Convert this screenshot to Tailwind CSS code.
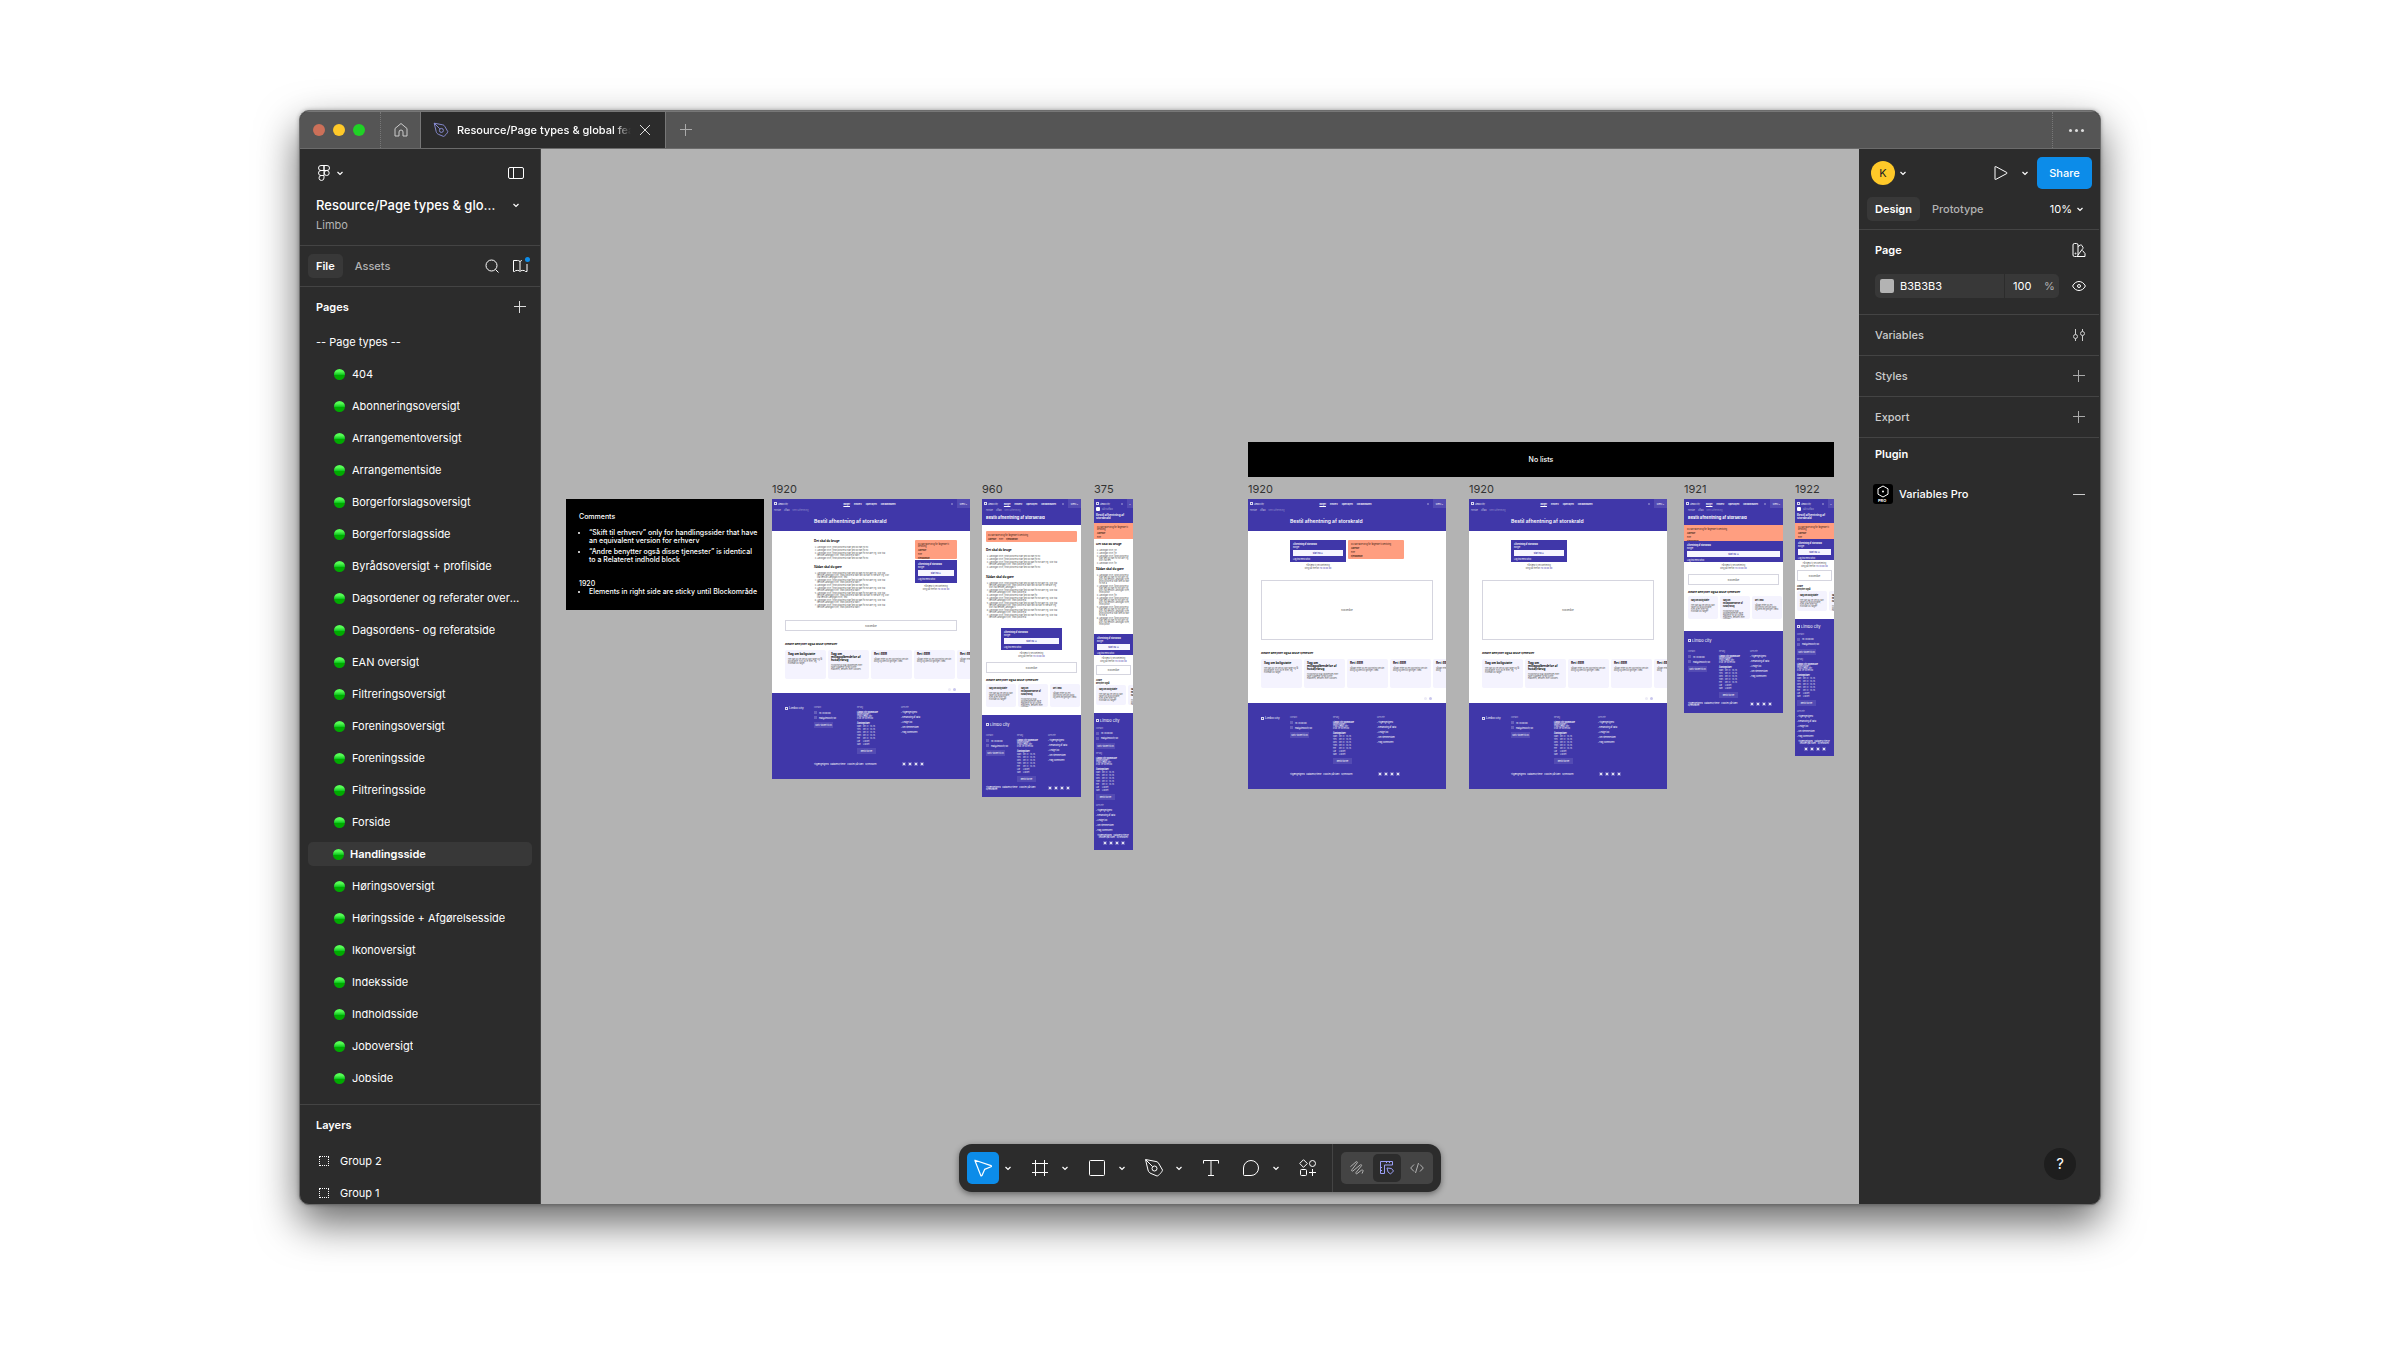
<!DOCTYPE html>
<html lang="en">
<head>
    <meta charset="UTF-8">
    <meta name="viewport" content="width=device-width, initial-scale=1.0">
    <title>Resource/Page types &amp; global features</title>
    <script src="https://cdn.jsdelivr.net/npm/@tailwindcss/browser@4"></script>
</head>
<body class="h-screen flex bg-white px-[12.5%] pt-[110px] pb-[145px] text-[11px] leading-4 text-white overflow-hidden font-['Inter','Liberation_Sans',sans-serif]">

    <!-- Shared icons -->
    <svg class="hidden">
        <symbol id="chevron" viewBox="0 0 8 8"><path d="M1.5 3 4 5.5 6.5 3" fill="none" stroke="currentColor" stroke-width="1.2"/></symbol>
        <symbol id="plus" viewBox="0 0 12 12"><path d="M5.500 0v12M0 5.500h12" fill="none" stroke="currentColor"/></symbol>
        <symbol id="pen" viewBox="0 0 20 20"><g fill="none" stroke="currentColor" stroke-linejoin="round"><path d="M1.500 1.500 12 3.500c1.500.3 2.300 1 3 2.500l3.500 6c0 1.500-4 6-5.500 6l-6-2.500c-1.500-.7-2.500-1.500-3-3.500z"/><path d="m2 2 6.500 6.500"/><circle cx="10.500" cy="10.500" r="2.500"/></g></symbol>
    </svg>

    <div class="-mx-px flex-1 min-w-0 flex flex-col rounded-[10px] border border-[#6c6c6c] bg-[#2c2c2c] overflow-hidden shadow-[0_18px_42px_rgba(0,0,0,0.6),0_0_4px_rgba(0,0,0,0.3)]">

        <!-- Title bar -->
        <header class="h-[38px] shrink-0 flex bg-[#555] border-t border-b border-t-[#777] border-b-[#6b6b6b]">
            <div class="w-[81px] flex items-center gap-2 pl-[13px] border-r border-dotted border-[#777]">
                <span class="size-3 rounded-full bg-[#cc7059]"></span>
                <span class="size-3 rounded-full bg-[#ffc929]"></span>
                <span class="size-3 rounded-full bg-[#20d226]"></span>
            </div>
            <button class="w-10 flex items-center justify-center border-r border-[#777] text-[#ccc]" aria-label="Home">
                <svg class="size-4" viewBox="0 0 16 16" fill="none" stroke="currentColor"><path d="M2 6.500 8 1.500l6 5v7.500h-4V10a2 2 0 0 0-4 0v4H2z" stroke-linejoin="round"/></svg>
            </button>
            <div class="w-[244px] flex items-center bg-[#2c2c2c] pl-3 pr-[14px] font-medium">
                <svg class="size-4 text-[#9b9ff5]"><use href="#pen"/></svg>
                <span class="ml-2 flex-1 overflow-hidden whitespace-nowrap [mask-image:linear-gradient(to_right,#000_90%,transparent)]">Resource/Page types &amp; global features</span>
                <button class="ml-2 text-[#ddd]" aria-label="Close tab">
                    <svg class="size-3" viewBox="0 0 12 12" fill="none" stroke="currentColor"><path d="m1 1 10 10M11 1 1 11"/></svg>
                </button>
            </div>
            <button class="w-10 flex items-center justify-center border-l border-[#777] text-[#aaa]" aria-label="New tab"><svg class="size-3"><use href="#plus"/></svg></button>
            <button class="ml-auto w-12 flex items-center justify-center gap-[3px] border-l border-dotted border-[#777]" aria-label="More">
                <span class="size-[3px] rounded-full bg-[#ddd]"></span><span class="size-[3px] rounded-full bg-[#ddd]"></span><span class="size-[3px] rounded-full bg-[#ddd]"></span>
            </button>
        </header>

        <div class="flex-1 min-h-0 flex">

            <!-- Left sidebar -->
            <aside class="w-[241px] shrink-0 overflow-hidden border-r border-[#444]">
                <div class="h-[97px] px-4 pt-3 border-b border-[#444]">
                    <div class="flex items-center h-6">
                        <svg class="w-4 h-4" viewBox="0 0 16 16" fill="none" stroke="currentColor"><path d="M8 .5H5a2.500 2.500 0 0 0 0 5h3zM8 .5h3a2.500 2.500 0 0 1 0 5H8zM8 5.500H5a2.500 2.500 0 0 0 0 5h3z"/><circle cx="10.700" cy="8" r="2.500"/><path d="M8 10.500H5A2.500 2.500 0 1 0 8 13z"/></svg>
                        <svg class="size-2 ml-1"><use href="#chevron"/></svg>
                        <button class="ml-auto" aria-label="Toggle panel">
                            <svg class="w-4 h-3" viewBox="0 0 16 12" fill="none" stroke="currentColor"><rect x=".5" y=".5" width="15" height="11" rx="1.500"/><path d="M5.500.5v11"/></svg>
                        </button>
                    </div>
                    <div class="mt-2 flex items-center h-6">
                        <h1 class="w-[180px] truncate text-[13px] font-medium">Resource/Page types &amp; global features</h1>
                        <svg class="size-2 ml-auto mr-1"><use href="#chevron"/></svg>
                    </div>
                    <p class="text-[#b3b3b3]">Limbo</p>
                </div>
                <div class="h-[41px] flex items-center px-2 border-b border-[#444]">
                    <button class="h-6 px-2 rounded-[5px] bg-[#383838] font-semibold">File</button>
                    <button class="h-6 px-2 ml-1 font-medium text-[#b3b3b3]">Assets</button>
                    <button class="ml-auto" aria-label="Search">
                        <svg class="size-[14px]" viewBox="0 0 14 14" fill="none" stroke="currentColor"><circle cx="6.500" cy="6.500" r="5.500"/><path d="m10.500 10.500 3 3"/></svg>
                    </button>
                    <button class="relative ml-[13px] mr-1" aria-label="Libraries">
                        <svg class="size-4" viewBox="0 0 16 16" fill="none" stroke="currentColor"><path d="M8 3.500v9M5.500 2.500C7 2.500 8 3 8 4c0-1 1-1.500 2-1.500M1.500 13.500v-11h4M1.500 13.500h1c.5-1.500 5-1.500 5.500 0 .5-1.500 5-1.500 5.500 0h1.500V6"/></svg>
                        <span class="absolute -top-px -right-[2px] size-[5px] rounded-full bg-[#0c8ce9]"></span>
                    </button>
                </div>
                <div class="h-10 flex items-center justify-between pl-4 pr-[14px]">
                    <h2 class="font-semibold">Pages</h2>
                    <button class="text-[#ddd]" aria-label="Add page"><svg class="size-3"><use href="#plus"/></svg></button>
                </div>
                <p class="px-4 py-[7px]">-- Page types --</p>
                <ul id="pages" class="px-2 pt-px pb-[10px]"></ul>
                <div class="border-t border-[#444] px-4">
                    <h2 class="h-10 flex items-center font-semibold">Layers</h2>
                    <ul>
                        <li class="h-8 flex items-center gap-[11px]"><span class="ml-[3px] size-[10px] border border-dotted border-white"></span>Group 2</li>
                        <li class="h-8 flex items-center gap-[11px]"><span class="ml-[3px] size-[10px] border border-dotted border-white"></span>Group 1</li>
                    </ul>
                </div>
            </aside>

            <!-- Canvas -->
            <main class="relative flex-1 min-w-0 overflow-hidden bg-[#b3b3b3]">
                <div id="canvas"></div>

                <section class="absolute left-[25px] top-[350px] w-[198px] h-[111px] bg-black px-[13px] pt-[14px] text-[7px] leading-[8px] font-medium">
                    <h3>Comments</h3>
                    <ul class="mt-[8px] pl-[10px] list-disc whitespace-nowrap space-y-[3px]">
                        <li>“Skift til erhverv” only for handlingssider that have<br>an equivalent version for erhverv</li>
                        <li>“Andre benytter også disse tjenester” is identical<br>to a Relateret indhold block</li>
                    </ul>
                    <h3 class="mt-[16px]">1920</h3>
                    <ul class="pl-[10px] list-disc whitespace-nowrap"><li>Elements in right side are sticky until Blockområde</li></ul>
                </section>
                <div class="absolute left-[707px] top-[293px] w-[586px] h-[35px] flex items-center justify-center bg-black text-[7px] font-medium">No lists</div>

                <!-- Toolbar -->
                <div class="absolute bottom-3 inset-x-0 flex justify-center">
                    <div class="h-12 flex items-center gap-2 px-2 rounded-[13px] bg-[#2c2c2c] shadow-[0_2px_6px_rgba(0,0,0,0.45)]">
                        <div class="flex items-center">
                            <button class="size-8 flex items-center justify-center rounded-[5px] bg-[#0c8ce9]" aria-label="Move">
                                <svg class="size-5" viewBox="0 0 20 20" fill="none" stroke="currentColor" stroke-width="1.200" stroke-linejoin="round"><path d="M2 2.200 18 7.600c.6.300.6.900 0 1.200L11.600 11.400 9 17.500c-.3.600-1 .6-1.200 0L2 2.800z"/></svg>
                            </button>
                            <svg class="size-2 ml-[5px] mr-1"><use href="#chevron"/></svg>
                        </div>
                        <div class="flex items-center">
                            <button class="size-8 flex items-center justify-center" aria-label="Frame">
                                <svg class="size-4" viewBox="0 0 16 16" fill="none" stroke="currentColor"><path d="M3.500 0v16M12.500 0v16M0 3.500h16M0 12.500h16"/></svg>
                            </button>
                            <svg class="size-2 ml-[5px] mr-1"><use href="#chevron"/></svg>
                        </div>
                        <div class="flex items-center">
                            <button class="size-8 flex items-center justify-center" aria-label="Rectangle">
                                <svg class="size-4" viewBox="0 0 16 16" fill="none" stroke="currentColor"><rect x=".5" y=".5" width="15" height="15" rx="1"/></svg>
                            </button>
                            <svg class="size-2 ml-[5px] mr-1"><use href="#chevron"/></svg>
                        </div>
                        <div class="flex items-center">
                            <button class="size-8 flex items-center justify-center" aria-label="Pen"><svg class="size-5"><use href="#pen"/></svg></button>
                            <svg class="size-2 ml-[5px] mr-1"><use href="#chevron"/></svg>
                        </div>
                        <button class="size-8 flex items-center justify-center" aria-label="Text">
                            <svg class="size-4" viewBox="0 0 16 16" fill="none" stroke="currentColor"><path d="M.5 3.500v-3h15v3M8 .5v15M5 15.500h6"/></svg>
                        </button>
                        <div class="flex items-center">
                            <button class="size-8 flex items-center justify-center" aria-label="Comment">
                                <svg class="size-4" viewBox="0 0 16 16" fill="none" stroke="currentColor"><path d="M.5 8A7.500 7.500 0 1 1 8 15.500H1.500a1 1 0 0 1-1-1z"/></svg>
                            </button>
                            <svg class="size-2 ml-[5px] mr-1"><use href="#chevron"/></svg>
                        </div>
                        <button class="size-8 flex items-center justify-center" aria-label="Resources">
                            <svg class="size-[18px]" viewBox="0 0 18 18" fill="none" stroke="currentColor" stroke-linejoin="round"><path d="M4.500.7 8.300 4.500 4.500 8.300.7 4.500zM13.500 10v7M10 13.500h7"/><circle cx="13.500" cy="4.500" r="3"/><rect x="1.500" y="10.500" width="6" height="6" rx="1"/></svg>
                        </button>
                        <div class="w-px h-12 bg-[#444]"></div>
                        <div class="h-8 w-[92px] flex items-center rounded-[5px] bg-[#444] text-[#b3b3b3]">
                            <button class="w-8 flex justify-center" aria-label="Draw">
                                <svg class="size-[14px]" viewBox="0 0 14 14" fill="none" stroke="currentColor" stroke-linecap="round" stroke-linejoin="round"><path d="M.7 5.500 6 .9c1-.6 1.800.2 1.200 1L1.800 8.800c-.6 1 .3 1.800 1.200 1.100l7.300-6c1-.7 1.800.2 1.100 1L6 11.500c-.6.900.2 1.700 1.100 1.100l4.300-3.400c1-.7 2-.1 1.600 1l-.8 2"/></svg>
                            </button>
                            <button class="w-7 h-7 flex items-center justify-center rounded-[5px] bg-[#2c2c2c] text-[#9b9ff5]" aria-label="Design">
                                <svg class="size-[14px]" viewBox="0 0 14 14" fill="none" stroke="currentColor" stroke-linejoin="round"><path d="M.5.5h12v3.500H4.500v8.500h-4zM6.500.5v1.500M9.500.5v1.500M.5 6.500H2M.5 9.500H2"/><path d="m7 7 4.500.5 2 2.500-3 3-2.500-2z"/></svg>
                            </button>
                            <button class="w-8 flex justify-center" aria-label="Dev mode">
                                <svg class="w-[14px] h-[12px]" viewBox="0 0 14 12" fill="none" stroke="currentColor"><path d="M4 2.500.7 6 4 9.500M10 2.500 13.300 6 10 9.500M8.500 1l-3 10"/></svg>
                            </button>
                        </div>
                    </div>
                </div>
            </main>

            <!-- Right panel -->
            <aside class="relative w-[241px] shrink-0 pr-px">
                <div class="h-[81px] pt-2 border-b border-[#444]">
                    <div class="flex items-center h-8 pl-3 pr-[7px]">
                        <span class="size-6 flex items-center justify-center rounded-full bg-[#ffc929] text-[#222]">K</span>
                        <svg class="size-2 ml-1"><use href="#chevron"/></svg>
                        <button class="ml-auto" aria-label="Present">
                            <svg class="size-[14px]" viewBox="0 0 14 14" fill="none" stroke="currentColor" stroke-linejoin="round"><path d="M1 .8c0-.3.300-.5.800-.2l11 5.900c.4.300.4.700 0 1L1.800 13.400c-.5.300-.8.100-.8-.200z"/></svg>
                        </button>
                        <svg class="size-2 ml-[13px] mr-2"><use href="#chevron"/></svg>
                        <button class="h-8 w-[55px] rounded-[5px] bg-[#0c8ce9] font-medium">Share</button>
                    </div>
                    <div class="mt-2 flex items-center px-2">
                        <button class="h-6 px-2 rounded-[5px] bg-[#383838] font-semibold">Design</button>
                        <button class="h-6 px-2 ml-1 font-medium text-[#b3b3b3]">Prototype</button>
                        <button class="ml-auto mr-[7px] flex items-center gap-1">10%<svg class="size-2"><use href="#chevron"/></svg></button>
                    </div>
                </div>
                <section class="h-[85px] px-4 border-b border-[#444]">
                    <div class="h-10 flex items-center justify-between">
                        <h2 class="font-semibold">Page</h2>
                        <svg class="size-[14px] -mr-[3px]" viewBox="0 0 14 14" fill="none" stroke="currentColor"><rect x="1" y=".5" width="5" height="13" rx="1.500"/><path d="M6 3.500 8.500 2c.5-.3 1-.1 1.300.4l1.200 2c.3.500.1 1-.3 1.300L6 12M10.500 7.500l2.500 3v3H5"/><circle cx="3.500" cy="10.500" r=".5"/></svg>
                    </div>
                    <div class="mt-1 flex items-center">
                        <div class="w-[184px] h-6 flex items-center rounded-[5px] bg-[#383838] overflow-hidden">
                            <span class="ml-[5px] size-[14px] rounded-[2px] bg-[#b3b3b3]"></span>
                            <input class="ml-[6px] w-[104px]" value="B3B3B3" aria-label="Page colour">
                            <input class="w-10 h-6 pl-2 border-l border-[#2c2c2c]" value="100" aria-label="Opacity">
                            <span class="text-[#b3b3b3]">%</span>
                        </div>
                        <button class="ml-auto -mr-[3px]" aria-label="Toggle visibility">
                            <svg class="w-[14px] h-[10px]" viewBox="0 0 14 10" fill="none" stroke="currentColor"><path d="M.6 5C3.500-1 10.500-1 13.400 5 10.500 11 3.500 11 .6 5z"/><circle cx="7" cy="5" r="1.500"/></svg>
                        </button>
                    </div>
                </section>
                <section class="h-[41px] px-4 flex items-center justify-between border-b border-[#444] text-[#ccc] font-medium">
                    <h2>Variables</h2>
                    <svg class="size-3 -mr-[2px]" viewBox="0 0 12 12" fill="none" stroke="currentColor"><path d="M2.500 0v5.500M2.500 9.500V12M9.500 0v2.500M9.500 6.500V12"/><circle cx="2.500" cy="7.500" r="2"/><circle cx="9.500" cy="4.500" r="2"/></svg>
                </section>
                <section class="h-[41px] px-4 flex items-center justify-between border-b border-[#444] text-[#ccc] font-medium">
                    <h2>Styles</h2>
                    <button class="-mr-[2px] text-[#aaa]" aria-label="Add style"><svg class="size-3"><use href="#plus"/></svg></button>
                </section>
                <section class="h-[41px] px-4 flex items-center justify-between border-b border-[#444] text-[#ccc] font-medium">
                    <h2>Export</h2>
                    <button class="-mr-[2px] text-[#aaa]" aria-label="Add export"><svg class="size-3"><use href="#plus"/></svg></button>
                </section>
                <section class="px-4 pt-2">
                    <h2 class="font-semibold">Plugin</h2>
                    <div class="mt-[22px] flex items-center font-medium">
                        <svg class="size-5 -ml-[2px] rounded-[3px] bg-black" viewBox="0 0 20 20" fill="none" stroke="currentColor"><path d="m10 2 5 2.800v5.400L10 13l-5-2.800V4.800z"/><circle cx="10" cy="7.500" r="1" fill="currentColor" stroke="none"/><text x="5" y="18" font-size="4" font-weight="700" fill="#fff" stroke="none">PRO</text></svg>
                        <span class="ml-[6px]">Variables Pro</span>
                        <button class="ml-auto -mr-[2px] w-3 h-4 flex items-center" aria-label="Remove plugin"><span class="w-3 h-px bg-[#ccc]"></span></button>
                    </div>
                </section>
                <button class="absolute right-6 bottom-6 size-8 rounded-full bg-[#1e1e1e] text-[15px]" aria-label="Help">?</button>
            </aside>
        </div>
    </div>

    <script>
        // Page list
        const pages = [
            '404', 'Abonneringsoversigt', 'Arrangementoversigt', 'Arrangementside', 'Borgerforslagsoversigt',
            'Borgerforslagsside', 'Byrådsoversigt + profilside', 'Dagsordener og referater oversigt',
            'Dagsordens- og referatside', 'EAN oversigt', 'Filtreringsoversigt', 'Foreningsoversigt',
            'Foreningsside', 'Filtreringsside', 'Forside', 'Handlingsside', 'Høringsoversigt',
            'Høringsside + Afgørelsesside', 'Ikonoversigt', 'Indeksside', 'Indholdsside', 'Joboversigt', 'Jobside'
        ];
        document.getElementById('pages').innerHTML = pages.map(name => {
            const active = name === 'Handlingsside';
            return `<li class="h-8 flex items-center">
                <a href="#" class="w-[224px] h-6 flex items-center pr-[10px] rounded-[5px] ${active ? 'bg-[#383838] font-semibold pl-[25px] gap-[6px]' : 'pl-[26px] gap-[7px]'}">
                    <span class="size-[11px] shrink-0 rounded-full bg-linear-to-b from-[#5f5] from-20% via-[#1c2] via-50% to-[#0a0] to-55%"></span>
                    <span class="truncate">${name}</span>
                </a>
            </li>`;
        }).join('');

        // Building blocks of the artboards
        const logo = `<span class="flex items-center gap-px whitespace-nowrap"><span class="size-[3px] border border-white/80"></span>Limbo city</span>`;

        function header(size) {
            const nav = size === 'sm' ? '' : `<span class="flex gap-[4px]"><b class="underline">Borger</b><b>Erhverv</b><b>Oplev byen</b><b>Om kommunen</b></span>`;
            const menu = `<span class="flex items-center gap-[4px]"><i class="size-[2px] rounded-full border border-white/40"></i><span class="h-[9px] flex items-center justify-center bg-white/10 ${size === 'sm' ? 'w-[6px]' : 'w-[13px]'}">${size === 'sm' ? '=' : 'Menu ='}</span></span>`;
            const crumbs = size === 'sm'
                ? `<p class="mt-[-1px] pl-[2px] flex items-center gap-[2px] text-white/50"><i class="size-[4px] rounded-[1px] bg-white"></i>Gå til affald</p>`
                : `<p class="mt-[1px] flex gap-[3px] text-white/70 ${size === 'lg' ? 'pl-[2px]' : 'pl-[4px]'}"><span>Forside</span><span>Affald</span><span class="text-white/40">Bestil afhentning</span></p>`;
            const title = {
                lg: `<h4 class="mt-[7px] pl-[42px] text-[5px] leading-[6px] font-semibold">Bestil afhentning af storskrald</h4>`,
                md: `<h4 class="mt-[4px] pl-[4px] text-[4px] leading-[6px] font-bold">Bestil afhentning af storskrald</h4>`,
                sm: `<h4 class="mt-[3px] pl-[2px] text-[3px] leading-[3px] font-semibold">Bestil afhentning af<br>storskrald</h4>`
            }[size];
            const height = { lg: 'h-[32px]', md: 'h-[26px]', sm: 'h-[24px]' }[size];
            return `<div class="${height} shrink-0 bg-[#4037a9] text-white">
                <div class="h-[9px] flex items-center justify-between pl-[2px]">${logo}${nav}${menu}</div>${crumbs}${title}</div>`;
        }

        function infoCard(cls) {
            return `<div class="${cls} shrink-0 bg-[#ff9e80] text-[#3a1d14] pl-[3px] pt-[3px] space-y-[2px] overflow-hidden">
                <p>Du kan have brug for følgende til bestilling</p><p class="font-bold">Adresse</p><p>eller</p><p class="font-bold">Ejendomsnr.</p></div>`;
        }

        // Info card with the keywords on one row
        const wideInfoCard = `<div class="mx-[4px] h-[11px] rounded-[1px] bg-[#ff9e80] text-[#3a1d14] pl-[2px] pt-[3px]">
            <p>Du kan have brug for følgende til bestilling</p><p class="mt-[2px] flex gap-[3px]"><b>Adresse</b><span>eller</span><b>Ejendomsnr.</b></p></div>`;

        function actionCard(cls) {
            return `<div class="${cls} shrink-0 bg-[#4037a9] text-white px-[3px] pt-[3px] overflow-hidden">
                <p class="font-bold">Afhentning af storskrald</p><p class="mt-[1px]">Borger</p>
                <div class="mt-[2px] h-[6px] flex items-center justify-center bg-[#f6f5ff] text-[#4037a9] font-bold">Start nu &nbsp;⊡</div>
                <p class="mt-[2px]">Log ind med MitID</p></div>`;
        }

        const caption = `<p class="text-center leading-[3px] whitespace-nowrap">Få hjælp til selvbetjening<br>Ring på telefon <span class="text-[#4037a9]">70 20 00 00</span></p>`;
        const line = 'Landsgas sych, finds posorm a stan føst bo han fst hor alle yrg. Stor lisa ræsson ';

        function steps(cls, counts, width) {
            const items = counts.map(n => `<li>${line.repeat(3).slice(0, Math.floor(width * n) - 12)}</li>`).join('');
            return `<ol class="${cls} list-decimal pl-[3px] space-y-px overflow-hidden">${items}</ol>`;
        }

        function block(cls) {
            return `<div class="${cls} flex items-center justify-center border border-[#d5d5df]">Blokområde</div>`;
        }

        function related(size) {
            const cards = [
                ['Søg om boligstøtte', 'Her kan du se om du kan søge og få boligstøtte, hvis du er lejer, og hvordan du søger.'],
                ['Søg om miljøgodkendelse af husdyrbrug', 'Husdyrbrug skal godkendes eller have tilladelse for at kunne etableres, ændres eller udvides.'],
                ['Ret i BBR', 'Sådan retter du en oplysning om din bolig og dens bygninger i BBR.'],
                ['Ret i BBR', 'Sådan retter du en oplysning om din bolig og dens bygninger i BBR.'],
                ['Ret i BBR', 'Sådan retter du en oplysning om din bolig.']
            ];
            const visible = { lg: 5, md: 4, sm: 2 }[size];
            const cardSize = { lg: 'w-[41px] h-[29px]', md: 'w-[30px] h-[23px]', sm: 'w-[30px] h-[20px]' }[size];
            const titleSize = size === 'lg' ? 'text-[3px] leading-[3px]' : 'text-[2px] leading-[3px]';
            const pad = { lg: 'pl-[13px]', md: 'pl-[4px]', sm: 'pl-[2px]' }[size];
            const heading = { lg: 'text-[3px] leading-[3px] h-[7px]', md: 'text-[3px] leading-[3px] h-[5px]', sm: 'text-[2px] leading-[3px] h-[6px]' }[size];
            return `<div class="${pad} overflow-hidden">
                <h5 class="${heading} font-bold text-black whitespace-nowrap">${size === 'sm' ? 'Andre<br>benytter også' : 'Andre benytter også disse tjenester'}</h5>
                <div class="flex gap-[2px]">${cards.slice(0, visible).map(([t, d]) => `<div class="${cardSize} shrink-0 rounded-[2px] bg-[#f4f3fe] p-[3px]"><h6 class="${titleSize} font-bold text-black">${t}</h6><p class="mt-[2px]">${d}</p></div>`).join('')}</div>
            </div>`;
        }

        const contact = `<div><p class="text-white/60">Kontakt</p><p class="mt-[3px] flex items-center gap-[2px]"><i class="size-[3px] bg-white/20"></i>70 20 00 00</p><p class="mt-[2px] flex items-center gap-[2px]"><i class="size-[3px] bg-white/20"></i>mail@limbocity.dk</p><p class="mt-[3px] w-[19px] h-[6px] flex items-center justify-center bg-white/10 whitespace-nowrap">Skriv sikkert til os</p></div>`;
        const visit = `<div><p class="text-white/60">Besøg</p><p class="mt-[3px] font-bold">Limbo City Kommune</p><p>Rådhusgade 1<br>7100 Limbo City<br>CVR 29 18 99 00</p><p class="mt-[3px] font-bold">Åbningstider</p>
            <div class="mt-px grid grid-cols-[6px_7px_6px] gap-y-[1px] text-white/80 whitespace-nowrap">${['Man', 'Tirs', 'Ons', 'Tors', 'Fre', 'Lør', 'Søn'].map((d, i) => `<span>${d}</span><span>${i < 5 ? '09-12' : 'Lukket'}</span><span>${i < 5 ? '13-15' : ''}</span>`).join('')}</div>
            <p class="mt-[3px] w-[19px] h-[6px] flex items-center justify-center bg-white/10 whitespace-nowrap">Bestil tid her</p></div>`;
        const shortcuts = `<div class="space-y-[3px] whitespace-nowrap"><p class="text-white/60">Genveje</p><p>› Tilgængelighed</p><p>› Behandling af data</p><p>› Ledige job</p><p>› Om hjemmesiden</p><p>› Følg kommunen</p></div>`;
        const social = `<span class="flex gap-[2px]">${'<i class="size-[4px] flex items-center justify-center bg-white/20"><i class="size-[2px] bg-white/80"></i></i>'.repeat(4)}</span>`;
        const bottomLinks = 'Tilgængelighed &nbsp; Databeskyttelse &nbsp; Cookies på siden &nbsp; Nyhedsbrev';

        function footer(size) {
            if (size === 'lg') {
                return `<div class="flex-1 flex flex-col bg-[#4037a9] text-white pt-[13px] pb-[13px]">
                    <div class="flex-1 grid grid-cols-[29px_43px_44px_1fr] items-start pl-[13px]"><span class="text-[3px] leading-[4px]">${logo}</span>${contact}${visit}${shortcuts}</div>
                    <div class="flex items-center pl-[42px]"><span class="w-[88px] whitespace-nowrap">${bottomLinks}</span>${social}</div></div>`;
            }
            if (size === 'md') {
                return `<div class="flex-1 flex flex-col bg-[#4037a9] text-white px-[4px] pt-[7px] pb-[7px]">
                    <div class="text-[4px] leading-[5px]">${logo}</div>
                    <div class="flex-1 mt-[7px] grid grid-cols-[31px_31px_1fr] items-start">${contact}${visit}${shortcuts}</div>
                    <div class="flex items-center"><span class="w-[62px]">${bottomLinks}</span>${social}</div></div>`;
            }
            return `<div class="flex-1 flex flex-col justify-between bg-[#4037a9] text-white px-[2px] pt-[5px] pb-[5px]">
                <div class="text-[4px] leading-[5px]">${logo}</div>${contact}${visit}${shortcuts}
                <div class="flex flex-col items-center gap-[3px]"><p class="text-center">${bottomLinks}</p>${social}</div></div>`;
        }

        const arrows = `<div class="mt-[9px] mr-[14px] flex justify-end gap-[2px]"><i class="size-[3px] rounded-full bg-[#ecebf6]"></i><i class="size-[3px] rounded-full bg-[#c9c6ee]"></i></div>`;
        const h5 = (cls, text) => `<h5 class="${cls} text-[3px] leading-[3px] font-bold text-black">${text}</h5>`;

        // Artboards, top to bottom content per breakpoint
        const boards = [
            { name: '1920', box: 'left-[231px] w-[198px]', body: 'h-[280px]', html: header('lg') + `
                <div class="h-[162px] shrink-0 pt-[9px]">
                    <div class="h-[80px] flex pl-[42px]">
                        <div class="w-[76px]">${h5('', 'Det skal du bruge')}${steps('mt-[3px] h-[14px]', [1, 1, 2, 1], 65)}${h5('mt-[6px]', 'Sådan skal du gøre')}${steps('mt-[3px] h-[46px]', [3, 2, 1, 2, 3, 2, 2], 65)}</div>
                        <div class="ml-[25px] w-[42px]">${infoCard('h-[19px] rounded-[1px]')}${actionCard('mt-[1px] h-[23px]')}<div class="mt-[2px]">${caption}</div></div>
                    </div>
                    ${block('mx-[13px] h-[11px]')}<div class="mt-[12px]">${related('lg')}</div>${arrows}
                </div>` + footer('lg') },
            { name: '960', box: 'left-[441px] w-[99px]', body: 'h-[298px]', html: header('md') + `
                <div class="h-[190px] shrink-0 pt-[6px]">
                    ${wideInfoCard}
                    <div class="px-[4px] w-[82px]">${h5('mt-[7px]', 'Det skal du bruge')}${steps('mt-[3px] h-[14px]', [1, 1, 2, 1], 65)}${h5('mt-[7px]', 'Sådan skal du gøre')}${steps('mt-[3px] h-[41px]', [3, 2, 1, 2, 3, 2, 2], 62)}</div>
                    ${actionCard('mt-[5px] mx-[19px] h-[22px]')}<div class="mt-[2px] h-[10px]">${caption}</div>
                    ${block('mx-[4px] h-[11px]')}<div class="mt-[6px]">${related('md')}</div>
                </div>` + footer('md') },
            { name: '375', box: 'left-[553px] w-[39px]', body: 'h-[351px]', html: header('sm') + infoCard('h-[16px]') + `
                <div class="h-[174px] shrink-0 pt-[4px]">
                    <div class="px-[2px] h-[91px] overflow-hidden">${h5('', 'Det skal du bruge')}${steps('mt-[3px] h-[15px]', [1, 1, 3, 1], 30)}${h5('mt-[4px]', 'Sådan skal du gøre')}${steps('mt-[3px] h-[58px]', [5, 4, 1, 4, 5, 4], 30)}</div>
                    ${actionCard('h-[21px]')}<div class="mt-[2px] h-[8px]">${caption}</div>
                    ${block('mx-[2px] h-[10px]')}<div class="mt-[4px]">${related('sm')}</div>
                </div>` + footer('sm') },
            ...['left-[707px] w-[198px]', 'left-[928px] w-[198px]'].map((box, i) => (
                { name: '1920', box, body: 'h-[290px]', html: header('lg') + `
                <div class="h-[172px] shrink-0 pt-[9px]">
                    <div class="h-[40px] flex gap-[2px] pl-[42px]"><div class="w-[56px]">${actionCard('h-[22px]')}<div class="mt-[2px]">${caption}</div></div>${i ? '' : infoCard('w-[56px] h-[19px] rounded-[1px]')}</div>
                    ${block('mx-[13px] h-[60px]')}<div class="mt-[12px]">${related('lg')}</div>${arrows}
                </div>` + footer('lg') })),
            { name: '1921', box: 'left-[1143px] w-[99px]', body: 'h-[214px]', html: header('md') + infoCard('h-[16px]') + actionCard('h-[21px]') + `
                <div class="h-[69px] shrink-0 pt-[2px]"><div class="h-[10px]">${caption}</div>${block('mx-[4px] h-[11px]')}<div class="mt-[6px]">${related('md')}</div></div>` + footer('md') },
            { name: '1922', box: 'left-[1254px] w-[39px]', body: 'h-[257px]', html: header('sm') + infoCard('h-[16px]') + actionCard('h-[21px]') + `
                <div class="h-[59px] shrink-0 pt-[2px]"><div class="h-[8px]">${caption}</div>${block('mx-[2px] h-[11px]')}<div class="mt-[4px]">${related('sm')}</div></div>` + footer('sm') }
        ];

        document.getElementById('canvas').innerHTML = boards.map(b => `
            <section class="absolute top-[333px] ${b.box}">
                <h3 class="h-[17px] text-[11px] leading-[15px] text-[#333]">${b.name}</h3>
                <div class="${b.body} flex flex-col overflow-hidden bg-white text-[2px] leading-[2px] text-[#555]">${b.html}</div>
            </section>`).join('');
    </script>
</body>
</html>
